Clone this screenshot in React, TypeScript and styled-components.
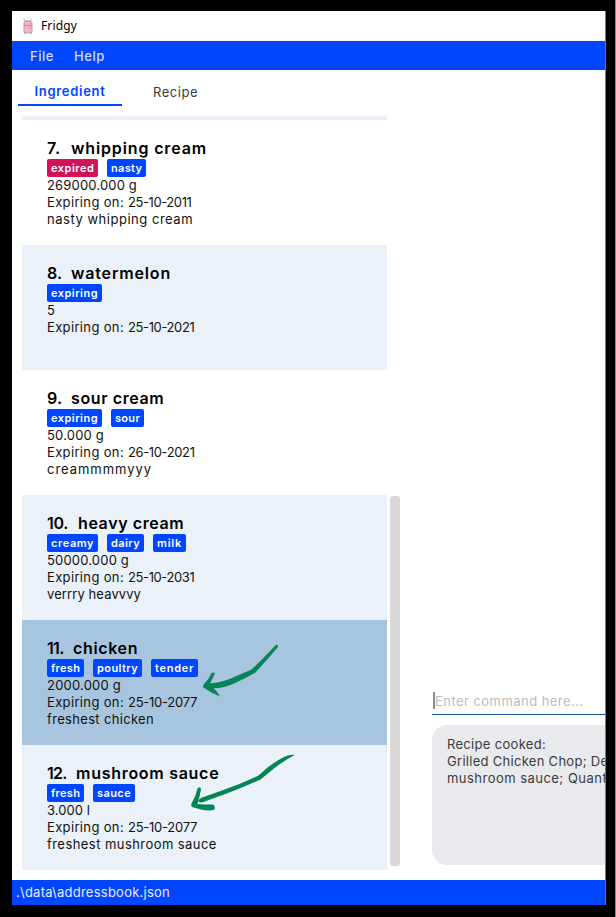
import React from "react";
import styled, { createGlobalStyle } from "styled-components";

const blue = "#0046ff";

const GlobalStyle = createGlobalStyle`
  * { box-sizing: border-box; }
  body {
    margin: 0;
    background: #000;
    font-family: Inter, "Open Sans", sans-serif;
    overflow: hidden;
  }
`;

const Screen = styled.div`
  position: relative;
  width: 616px;
  height: 917px;
  padding: 11px 9px 12px 12px;
  background: #000;
  border-right: 1px solid #8a8a8a;
`;

const Window = styled.main`
  display: flex;
  flex-direction: column;
  width: 594px;
  height: 894px;
  background: #fff;
  overflow: hidden;
  border-right: 1px solid #777;
`;

const TitleBar = styled.header`
  display: flex;
  align-items: center;
  flex: 0 0 30px;
  padding-left: 10px;
  gap: 7px;
  color: #000;
  font: 12px/18px "Noto Sans", sans-serif;
  letter-spacing: 0.14px;
`;

const MenuBar = styled.nav`
  display: flex;
  flex: 0 0 29px;
  align-items: center;
  padding-left: 18px;
  gap: 20px;
  background: ${blue};
`;

const MenuItem = styled.span`
  color: #d3deff;
  font-size: 13px;
  font-weight: 500;
  line-height: 18px;
  letter-spacing: 0.55px;
`;

const Body = styled.div`
  display: flex;
  flex: 0 0 810px;
`;

const Sidebar = styled.section`
  display: flex;
  flex-direction: column;
  width: 388px;
`;

const TabBar = styled.div`
  display: flex;
  height: 36px;
  padding-left: 6px;
`;

const Tab = styled.span<{ $active?: boolean }>`
  display: flex;
  align-items: center;
  justify-content: center;
  width: ${(p) => (p.$active ? 104 : 107)}px;
  padding-top: ${(p) => (p.$active ? 8 : 9)}px;
  border-bottom: 2px solid ${(p) => (p.$active ? blue : "transparent")};
  color: ${(p) => (p.$active ? blue : "#443a34")};
  font-size: 13px;
  font-weight: ${(p) => (p.$active ? 600 : 400)};
  letter-spacing: ${(p) => (p.$active ? 0.7 : 0.52)}px;
`;

const ListArea = styled.div`
  display: flex;
  margin: 10px 0 0 10px;
  gap: 3px;
`;

const List = styled.ul`
  width: 365px;
  margin: 0;
  padding: 0;
  border-top: 4px solid #eaf1f9;
  list-style: none;
`;

const ScrollTrack = styled.div`
  display: flex;
  align-items: flex-end;
  width: 10px;
  padding-bottom: 4px;
`;

const ScrollThumb = styled.div`
  width: 10px;
  height: 370px;
  border-radius: 3px;
  background: #d8d8d8;
`;

const Card = styled.li<{ $tone: Tone }>`
  height: 125px;
  padding: 18px 0 0 25px;
  background: ${(p) => ({ plain: "#fff", tint: "#eaf1f9", selected: "#a8c5df" })[p.$tone]};
`;

const Title = styled.h2<{ $indent: number }>`
  display: grid;
  grid-template-columns: ${(p) => p.$indent}px auto;
  margin: 0;
  color: #000;
  font-size: 16px;
  font-weight: 600;
  line-height: 21px;
  white-space: nowrap;
`;

const Tracked = styled.span<{ $track: number }>`
  letter-spacing: ${(p) => p.$track}px;
`;

const Tags = styled.div`
  display: flex;
  gap: 9px;
  height: 18px;
`;

const Tag = styled.span<{ $width: number; $track: number; $expired: boolean }>`
  width: ${(p) => p.$width}px;
  padding-left: 4px;
  border-radius: 2px;
  background: ${(p) => (p.$expired ? "#d0125a" : blue)};
  color: #fff;
  font-size: 11px;
  font-weight: 600;
  line-height: 18px;
  letter-spacing: ${(p) => p.$track}px;
  white-space: nowrap;
`;

const Line = styled.div<{ $track?: number }>`
  color: #111;
  font-size: 13px;
  line-height: 17px;
  letter-spacing: ${(p) => p.$track ?? 0}px;
  white-space: pre;
`;

const CommandPane = styled.section`
  display: flex;
  flex-direction: column;
  flex: 1;
  min-width: 0;
  margin: 616px 0 15px 32px;
`;

const CommandField = styled.div`
  height: 29px;
  padding: 6px 0 0 1px;
  border-bottom: 1px solid #175c9e;
`;

const Placeholder = styled.div`
  height: 17px;
  border-left: 2px solid #8c8c8c;
  color: #bcbcbc;
  font-size: 13px;
  line-height: 18px;
  letter-spacing: 0.45px;
  white-space: nowrap;
`;

const Result = styled.div`
  height: 140px;
  margin-top: 10px;
  padding: 11px 0 0 15px;
  border-radius: 15px 0 0 15px;
  background: #e9eaee;
  overflow: hidden;

  ${Line} {
    color: #3b3b3b;
  }
`;

const StatusBar = styled.footer`
  flex: 0 0 25px;
  padding-left: 4px;
  background: ${blue};
  color: #e6edff;
  font-size: 13px;
  line-height: 24px;
  letter-spacing: 0.24px;
`;

const Annotations = styled.svg`
  position: absolute;
  left: 185px;
  top: 635px;
`;

type Tone = "plain" | "tint" | "selected";
type Text = [text: string, track: number];
type TagData = [text: string, width: number, track: number];

interface Ingredient {
  index: Text;
  indent: number;
  name: Text;
  tone: Tone;
  tags: TagData[];
  quantity: Text;
  expiry: Text;
  note?: Text;
}

const ingredients: Ingredient[] = [
  {
    index: ["7.", 0.8], indent: 24, name: ["whipping cream", 0.86], tone: "plain",
    tags: [["expired", 51, 0.5], ["nasty", 39, 0.3]],
    quantity: ["269000.000 g", 0.17], expiry: ["25-10-2011", -0.42], note: ["nasty whipping cream", 0.52],
  },
  {
    index: ["8.", 0.2], indent: 24, name: ["watermelon", 0.84], tone: "tint",
    tags: [["expiring", 55, 0.47]],
    quantity: ["5", 0], expiry: ["25-10-2021", -0.38],
  },
  {
    index: ["9.", 0.2], indent: 24, name: ["sour cream", 0.6], tone: "plain",
    tags: [["expiring", 55, 0.47], ["sour", 33, 0.3]],
    quantity: ["50.000 g", 0.2], expiry: ["26-10-2021", -0.38], note: ["creammmmyyy", 0.96],
  },
  {
    index: ["10.", -0.3], indent: 31, name: ["heavy cream", 0.6], tone: "tint",
    tags: [["creamy", 51, 0.58], ["dairy", 37, 0.4], ["milk", 33, 0.77]],
    quantity: ["50000.000 g", 0.18], expiry: ["25-10-2031", -0.4], note: ["verrry heavvvy", 0.1],
  },
  {
    index: ["11.", -0.7], indent: 26, name: ["chicken", 0.65], tone: "selected",
    tags: [["fresh", 37, 0.3], ["poultry", 49, 0.42], ["tender", 47, 0.71]],
    quantity: ["2000.000 g", 0.21], expiry: ["25-10-2077", -0.25], note: ["freshest chicken", 0.33],
  },
  {
    index: ["12.", -0.8], indent: 29, name: ["mushroom sauce", 0.72], tone: "tint",
    tags: [["fresh", 37, 0.3], ["sauce", 42, 0.42]],
    quantity: ["3.000 l", 0.06], expiry: ["25-10-2077", -0.25], note: ["freshest mushroom sauce", 0.44],
  },
];

function IngredientCard({ item }: { item: Ingredient }) {
  return (
    <Card $tone={item.tone}>
      <Title $indent={item.indent}>
        <Tracked $track={item.index[1]}>{item.index[0]}</Tracked>
        <Tracked $track={item.name[1]}>{item.name[0]}</Tracked>
      </Title>
      <Tags>
        {item.tags.map(([text, width, track]) => (
          <Tag key={text} $width={width} $track={track} $expired={text === "expired"}>
            {text}
          </Tag>
        ))}
      </Tags>
      <Line $track={item.quantity[1]}>{item.quantity[0]}</Line>
      <Line $track={0.35}>
        {"Expiring on: "}
        <Tracked $track={item.expiry[1]}>{item.expiry[0]}</Tracked>
      </Line>
      {item.note && <Line $track={item.note[1]}>{item.note[0]}</Line>}
    </Card>
  );
}

function FridgeIcon() {
  return (
    <svg width="12" height="16" viewBox="0 0 12 16">
      <path d="M1 1.5h2M5 .8h1.5M8 1.5h2M2 2.6h7" stroke="#c3c8c5" strokeWidth="1" />
      <rect x="2" y="3.5" width="8" height="11.5" rx="1" fill="#f5b5c5" stroke="#b9a4ae" strokeWidth="1" />
      <path d="M2 7.5h8M8 5v1.3M8 9v2" stroke="#b18898" strokeWidth=".8" />
      <path d="M2 15h1.5M8.5 15H10" stroke="#93979b" strokeWidth="1" />
    </svg>
  );
}

export default function App() {
  return (
    <>
      <GlobalStyle />
      <Screen>
        <Window>
          <TitleBar>
            <FridgeIcon />
            Fridgy
          </TitleBar>
          <MenuBar>
            <MenuItem>File</MenuItem>
            <MenuItem>Help</MenuItem>
          </MenuBar>
          <Body>
            <Sidebar>
              <TabBar>
                <Tab $active>Ingredient</Tab>
                <Tab>Recipe</Tab>
              </TabBar>
              <ListArea>
                <List>
                  {ingredients.map((item) => (
                    <IngredientCard key={item.index[0]} item={item} />
                  ))}
                </List>
                <ScrollTrack>
                  <ScrollThumb />
                </ScrollTrack>
              </ListArea>
            </Sidebar>
            <CommandPane>
              <CommandField>
                <Placeholder>Enter command here...</Placeholder>
              </CommandField>
              <Result>
                <Line $track={0.31}>Recipe cooked:</Line>
                <Line $track={0.29}>Grilled Chicken Chop; De</Line>
                <Line $track={0.47}>mushroom sauce; Quant</Line>
              </Result>
            </CommandPane>
          </Body>
          <StatusBar>{".\\data\\addressbook.json"}</StatusBar>
        </Window>
        <Annotations width="115" height="180" viewBox="185 635 115 180" fill="#058457">
          <path d="M276 644.8Q278.500 644.500 278 647Q266 661 255.500 672.500Q246 678 234 683.500Q224 688 213.500 688.300Q217 691 220 696.600Q211 693 203.500 687.500Q202.500 686 204 684Q209 679 211.500 673Q215.500 671.500 214.500 674.500L210 683.500Q222 682.500 233 677.500L251.500 669.500Q263 659 276 644.800Z" />
          <path d="M294.800 755Q284 760.500 274 768.500L260.500 779.500Q243 787.500 224 794.500L202 802.500Q198 803 198.500 800.500Q199 799 202 797.500L222 790.500Q242 783.500 258.500 775.500Q270 764 284 757Q290 754 294.800 755Z" />
          <path d="M197.500 788.500Q200 786 201 789Q200 796 197.500 804Q205 804.500 213 804.500Q215.500 806 214.500 809.500Q209 811.500 201 809.500L192 807Q190.500 805.500 191.500 803.500Q196 796 197.500 788.500Z" />
        </Annotations>
      </Screen>
    </>
  );
}
